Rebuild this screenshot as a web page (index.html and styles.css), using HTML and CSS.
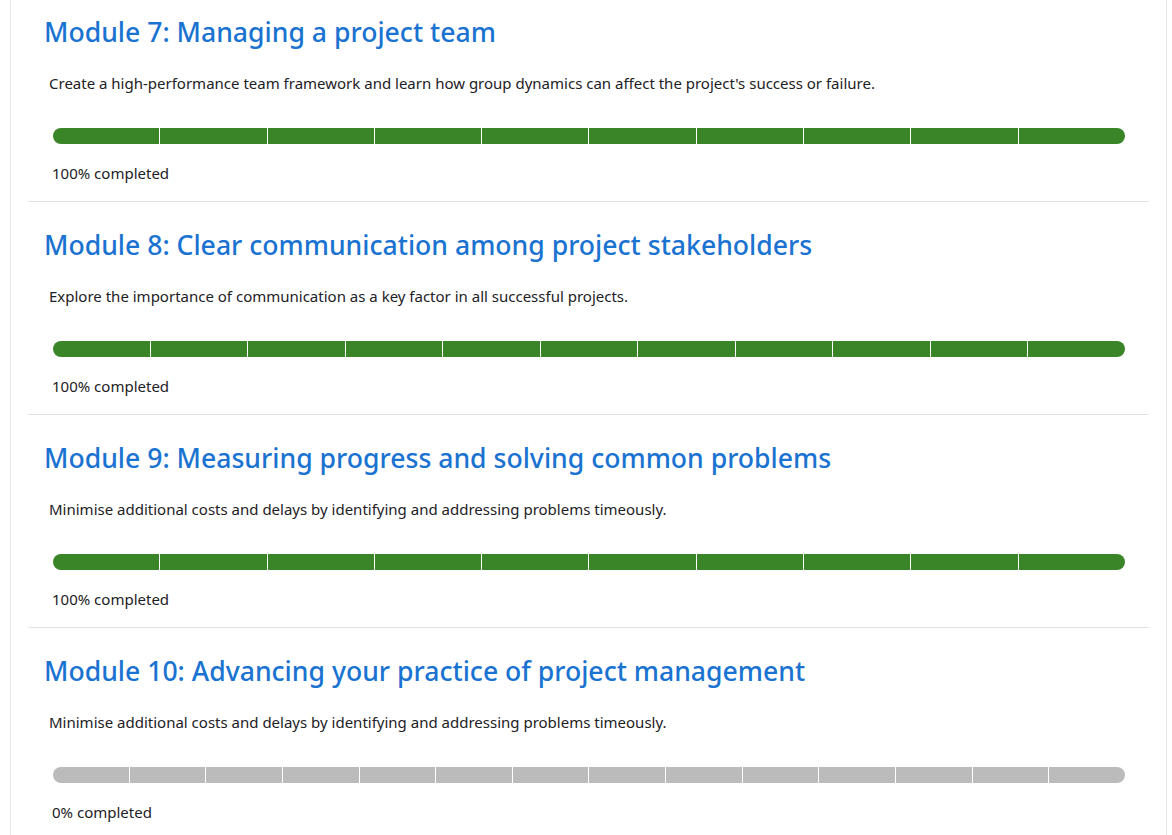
FILE: index.html
```html
<!DOCTYPE html>
<html lang="en">

<head>
    <meta charset="UTF-8">
    <meta name="viewport" content="width=device-width, initial-scale=1.0">
    <title>Course modules</title>
    <link rel="stylesheet" href="styles.css">
</head>

<body>
    <div class="course-content">
        <ul class="sections">
            <li class="section">
                <h3 class="section-title">Module 7: Managing a project team</h3>
                <div class="summary">Create a high-performance team framework and learn how group dynamics can affect the project's success or failure.</div>
                <div class="progress-bar done">
                    <span></span><span></span><span></span><span></span><span></span>
                    <span></span><span></span><span></span><span></span><span></span>
                </div>
                <div class="progress-text">100% completed</div>
            </li>
            <li class="section">
                <h3 class="section-title">Module 8: Clear communication among project stakeholders</h3>
                <div class="summary">Explore the importance of communication as a key factor in all successful projects.</div>
                <div class="progress-bar done">
                    <span></span><span></span><span></span><span></span><span></span><span></span>
                    <span></span><span></span><span></span><span></span><span></span>
                </div>
                <div class="progress-text">100% completed</div>
            </li>
            <li class="section">
                <h3 class="section-title">Module 9: Measuring progress and solving common problems</h3>
                <div class="summary">Minimise additional costs and delays by identifying and addressing problems timeously.</div>
                <div class="progress-bar done">
                    <span></span><span></span><span></span><span></span><span></span>
                    <span></span><span></span><span></span><span></span><span></span>
                </div>
                <div class="progress-text">100% completed</div>
            </li>
            <li class="section">
                <h3 class="section-title">Module 10: Advancing your practice of project management</h3>
                <div class="summary">Minimise additional costs and delays by identifying and addressing problems timeously.</div>
                <div class="progress-bar">
                    <span></span><span></span><span></span><span></span><span></span><span></span><span></span>
                    <span></span><span></span><span></span><span></span><span></span><span></span><span></span>
                </div>
                <div class="progress-text">0% completed</div>
            </li>
        </ul>
    </div>
</body>

</html>
```

FILE: styles.css
```css
body {
    margin: 0;
    background-color: #fff;
    color: #1d2125;
    font-family: "Noto Sans", "Open Sans", sans-serif;
    overflow: hidden;
}

.course-content {
    margin: -11px 5px 0 10px;
    border-left: 1px solid #e8e8e8;
    border-right: 1px solid #e8e8e8;
    min-height: 900px;
}

.sections {
    list-style: none;
    margin: 0;
    padding: 0 17px;
}

.section {
    padding: 26px 16px 17px;
    border-bottom: 1px solid #dee2e6;
    border-radius: 0 0 2px 2px;
}

.section-title {
    margin: 0;
    font-size: 26.6px;
    line-height: 34px;
    font-weight: 500;
    color: #1a73d1;
}

.summary {
    margin: 23px 0 0 5px;
    font-size: 15px;
    line-height: 22px;
}

.progress-bar {
    display: flex;
    margin: 34px 8px 0 9px;
    height: 16px;
    border-radius: 8px;
    overflow: hidden;
    background-color: #bbb;
}

.progress-bar span {
    flex: 1;
    border-left: 1px solid #fff;
}

.progress-bar span:first-child {
    border-left: none;
}

.progress-bar.done {
    background-color: #3a8527;
}

.progress-text {
    margin: 18px 0 0 8px;
    font-size: 15px;
    line-height: 22px;
}
```
